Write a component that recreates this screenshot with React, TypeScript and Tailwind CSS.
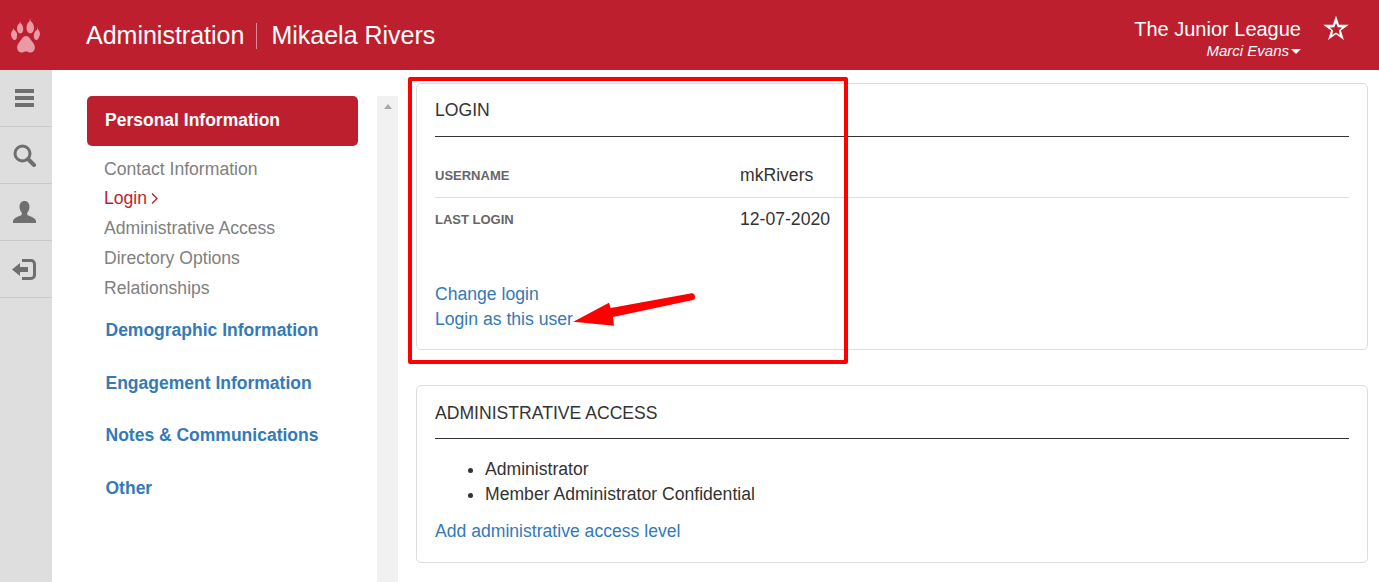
import React from 'react';

const Paw = () => (
  <svg width="30" height="36" viewBox="0 0 30 36" fill="#e99aa4">
    <path d="M15 18c-3 0-4.500 3.500-6.500 6-1.500 1.800-2.800 3.800-2.300 6.500.5 2.800 2.800 4.500 5 4 1.500-.4 2.600-1 3.800-1s2.300.6 3.800 1c2.200.5 4.500-1.200 5-4 .5-2.700-.8-4.700-2.300-6.500C19.500 21.500 18 18 15 18z" />
    <path d="M9 3l.6 2.200c1.400.8 2.400 3 2.600 5.300.2 2.700-.8 4.900-2.800 5-2 .1-3.400-2.200-3.400-4.900 0-2.400 1-4.700 2.800-5.400z" />
    <path d="M19 0l.7 3.200c1.700.8 3.300 3.500 3.300 6.500 0 3-1.500 5.600-3.700 5.600S15.500 12.700 15.500 9.700c0-2.900 1.400-5.600 3.100-6.500z" />
    <path d="M2.500 10l.6 2c1.300.5 2.500 2 2.900 3.800.4 2.300-.2 5.700-2 6.200-1.700.3-3.500-2.300-3.900-4.300-.4-2 .3-4.300 1.700-5.400z" />
    <path d="M26.500 9l.4 2.500c1.300.8 2.300 2.700 2 4.700-.3 2.300-1.800 5.900-3.600 5.800-1.800-.2-2.700-2.600-2.500-4.800.2-2.200 1.400-4.500 3.200-5.400z" />
  </svg>
);

const MenuIcon = () => (
  <svg width="19" height="19" viewBox="0 0 19 19" fill="#6f6f6f">
    <rect x="0" y="0" width="19" height="4" />
    <rect x="0" y="7" width="19" height="4" />
    <rect x="0" y="14" width="19" height="4" />
  </svg>
);

const SearchIcon = () => (
  <svg width="23" height="23" viewBox="0 0 23 23" fill="none" stroke="#6f6f6f">
    <circle cx="9.500" cy="9.500" r="7.500" strokeWidth="3" />
    <path d="M15 15l6 6" strokeWidth="4" strokeLinecap="round" />
  </svg>
);

const UserIcon = () => (
  <svg width="23" height="23" viewBox="0 0 23 23" fill="#6f6f6f">
    <path d="M11.500 0c3.200 0 5 2.500 5 5.800 0 2.400-1 4.500-2.200 5.700v2.500c2 1 8.700 2.700 8.700 6.200V22H0v-1.800c0-3.500 6.700-5.200 8.700-6.200v-2.500C7.500 10.300 6.500 8.200 6.500 5.800 6.500 2.500 8.300 0 11.500 0z" />
  </svg>
);

const LoginIcon = () => (
  <svg width="24" height="21" viewBox="0 0 24 21" fill="#6f6f6f">
    <path d="M0 10.500L8 4v4h8v5H8v4z" />
    <path d="M10 0h9a5 5 0 0 1 5 5v11a5 5 0 0 1-5 5h-9v-3h9a2 2 0 0 0 2-2V5a2 2 0 0 0-2-2h-9z" />
  </svg>
);

const StarIcon = () => (
  <svg width="26" height="26" viewBox="0 0 26 26" fill="#fff" fillRule="evenodd">
    <path d="M13 .5L16.030 9.830 25.840 9.830 17.910 15.590 20.930 24.920 13 19.160 5.070 24.920 8.090 15.590.16 9.830 9.970 9.830zM13 8.100L11.240 12.170 6.800 12.600 10.150 15.530 9.200 19.900 13 17.600 16.800 19.900 15.850 15.530 19.200 12.600 14.760 12.170z" />
  </svg>
);

const railItem = 'flex h-[57px] items-center justify-center border-b border-[#c9c9c9] pr-[4px]';
const subLink = 'block text-[17.600px] leading-[30px] text-[#808080]';
const sectionLink = 'pl-[18.500px] text-[17.500px] font-bold leading-[26px] text-[#337ab7]';
const rowLabel = 'w-[305px] text-[13px] font-bold text-[#666]';

export default function App() {
  return (
    <div className="relative h-[582px] w-[1379px] overflow-hidden bg-white font-['Liberation_Sans',Arial,sans-serif] text-[17.600px] text-[#333]">
      {/* Top bar */}
      <header className="flex h-[70px] items-center bg-[#bd1f2e] text-white">
        <div className="ml-[11px] w-[75px] pt-[1px]">
          <Paw />
        </div>
        <div className="flex items-center pt-[2px] text-[25px]">
          <span>Administration</span>
          <span className="ml-[12px] mr-[14px] h-[26px] w-px bg-[#dc8a93]" />
          <span>Mikaela Rivers</span>
        </div>
        <div className="ml-auto mr-[78px] mt-[7px] flex flex-col items-end">
          <span className="text-[20px] leading-[24px]">The Junior League</span>
          <span className="flex items-center text-[15px] italic leading-[20px]">
            Marci Evans
            <span className="ml-[2px] mt-[1px] h-0 w-0 border-x-[5px] border-t-[5px] border-x-transparent border-t-white" />
          </span>
        </div>
        <div className="absolute left-[1323px] top-[15px]">
          <StarIcon />
        </div>
      </header>

      <div className="flex h-[512px]">
        {/* Icon rail */}
        <nav className="w-[52px] shrink-0 bg-[#dedede]">
          <div className={railItem}><MenuIcon /></div>
          <div className={railItem}><SearchIcon /></div>
          <div className={railItem}><UserIcon /></div>
          <div className={railItem}><LoginIcon /></div>
        </nav>

        {/* Section nav */}
        <aside className="w-[325px] shrink-0 pl-[35px] pr-[19px] pt-[26px]">
          <div className="flex h-[50px] items-start rounded-[5px] bg-[#bd1f2e] pl-[18px] pt-[11px] text-[17.500px] font-bold leading-[26px] text-white">
            Personal Information
          </div>
          <div className="mt-[8px] pl-[17px]">
            <a className="mb-[-1px] block text-[17.600px] leading-[30px] text-[#808080]">Contact Information</a>
            <a className="flex items-center text-[17.600px] leading-[30px] text-[#bd1f2e]">
              Login
              <svg width="7" height="11" viewBox="0 0 7 11" fill="none" stroke="#bd1f2e" strokeWidth="1.300" className="ml-[4px] mt-[1px]">
                <path d="M1 .5l5 5-5 5" />
              </svg>
            </a>
            <a className={subLink}>Administrative Access</a>
            <a className={subLink}>Directory Options</a>
            <a className={subLink}>Relationships</a>
          </div>
          <div className="mt-[14px] flex flex-col gap-[26.600px]">
            <a className={sectionLink}>Demographic Information</a>
            <a className={sectionLink}>Engagement Information</a>
            <a className={sectionLink}>Notes &amp; Communications</a>
            <a className={sectionLink}>Other</a>
          </div>
        </aside>

        {/* Scrollbar track */}
        <div className="mt-[26px] flex w-[21px] shrink-0 justify-center bg-[#f1f1f1] pt-[8px]">
          <span className="h-0 w-0 border-x-[4.500px] border-b-[5px] border-x-transparent border-b-[#a9a9a9]" />
        </div>

        {/* Cards */}
        <main className="ml-[18px] w-[952px] shrink-0 pt-[13px]">
          <section className="h-[267px] rounded-[5px] border border-[#dddddd] px-[18px]">
            <h2 className="flex h-[53px] items-center border-b border-[#333] leading-[26px]">LOGIN</h2>
            <div className="mt-[16px] flex h-[45px] items-center border-b border-[#dddddd] pt-[1px]">
              <span className={rowLabel}>USERNAME</span>
              <span>mkRivers</span>
            </div>
            <div className="flex h-[43px] items-center">
              <span className={rowLabel}>LAST LOGIN</span>
              <span>12-07-2020</span>
            </div>
            <div className="mt-[41px] flex flex-col leading-[25px] text-[#337ab7]">
              <a>Change login</a>
              <a>Login as this user</a>
            </div>
          </section>

          <section className="mt-[35px] h-[178px] rounded-[5px] border border-[#dddddd] px-[18px]">
            <h2 className="flex h-[53px] items-center border-b border-[#333] pt-[1px] leading-[26px]">ADMINISTRATIVE ACCESS</h2>
            <ul className="mt-[18px] list-disc pl-[50px] leading-[25px]">
              <li>Administrator</li>
              <li>Member Administrator Confidential</li>
            </ul>
            <a className="mt-[12px] block leading-[25px] text-[#337ab7]">Add administrative access level</a>
          </section>
        </main>
      </div>

      {/* Annotation drawn over the screenshot */}
      <div className="absolute left-[408px] top-[77px] h-[287px] w-[440px] rounded-[2px] border-[4px] border-[#ff0000]" />
      <svg className="absolute left-[570px] top-[288px]" width="130" height="42" viewBox="0 0 130 42" fill="#ff0000">
        <path d="M3.300 33.700L39 14.700 40.700 20 121.700 5.300a3.500 3.500 0 0 1 1.300 6.700L43 29 44 37.700z" />
      </svg>
    </div>
  );
}
